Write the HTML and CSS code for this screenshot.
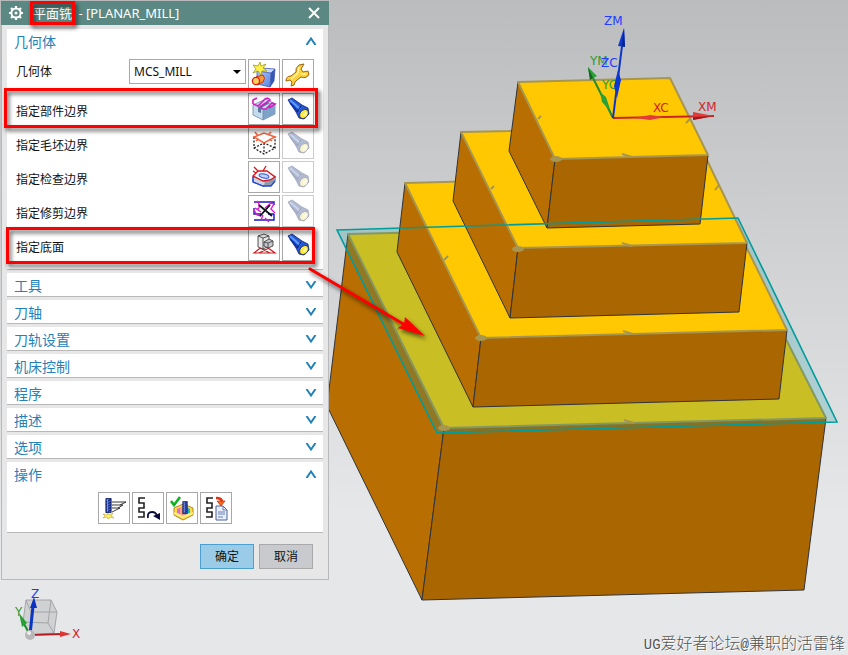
FILE: index.html
```html
<!DOCTYPE html>
<html lang="zh-CN">
<head>
<meta charset="utf-8">
<title>平面铣 - [PLANAR_MILL]</title>
<link rel="stylesheet" href="styles.css">
</head>
<body>
<svg class="scene" viewBox="0 0 848 655" preserveAspectRatio="xMinYMin meet" aria-hidden="true">
  <!-- base block -->
  <g stroke="#30343c" stroke-width="1" stroke-linejoin="round">
    <polygon points="348,234 327,406 422,600 444,428" fill="#b86e00"/>
    <polygon points="444,428 826,418 804,590 422,600" fill="#aa6600"/>
    <polygon points="348,234 728,225 826,418 444,428" fill="#ffc800" stroke="none"/>
  </g>
  <path class="rim" d="M444 428 348 234 728 225 826 418Z"/>
  <polygon points="337,230 738,218 837,422 437,433" fill="#0aa0a4" fill-opacity=".22"/>
  <!-- tier 1 -->
  <g stroke="#30343c" stroke-width="1" stroke-linejoin="round">
    <polygon points="405,183 397,252 473,407 481,338" fill="#b86e00"/>
    <polygon points="481,338 787,330 779,399 473,407" fill="#aa6600"/>
    <polygon points="405,183 711,175 787,330 481,338" fill="#ffc800" stroke="none"/>
  </g>
  <path class="rim" d="M481 338 405 183 711 175 787 330Z"/>
  <!-- tier 2 -->
  <g stroke="#30343c" stroke-width="1" stroke-linejoin="round">
    <polygon points="461,132 453,201 510,318 518,248" fill="#b86e00"/>
    <polygon points="518,248 747,243 739,312 510,318" fill="#aa6600"/>
    <polygon points="461,132 691,127 747,243 518,248" fill="#ffc800" stroke="none"/>
  </g>
  <path class="rim" d="M518 248 461 132 691 127 747 243Z"/>
  <!-- tier 3 -->
  <g stroke="#30343c" stroke-width="1" stroke-linejoin="round">
    <polygon points="518,82 509,151 547,228 555,159" fill="#b86e00"/>
    <polygon points="555,159 708,155 700,224 547,228" fill="#aa6600"/>
    <polygon points="518,82 670,78 708,155 555,159" fill="#ffc800" stroke="none"/>
  </g>
  <path class="rim" d="M555 159 518 82 670 78 708 155Z"/>
  <path class="tick" d="M622 154l10 3M622 243l10 3M623 331l10 3M624 420l10 3M538 119l3-3M491 189l3-3M444 260l4-4M397 330l3-3M719 185l-4 5M690 119l-4 4"/>
  <g fill="#a89650">
    <ellipse cx="556" cy="159" rx="6" ry="3"/><ellipse cx="518" cy="249" rx="6" ry="3"/>
    <ellipse cx="481" cy="338" rx="6" ry="3"/><ellipse cx="444" cy="428" rx="6" ry="3"/>
  </g>
  <polygon points="337,230 738,218 837,422 437,433" fill="none" stroke="#009c9c" stroke-width="1.6"/>
  <!-- machine and work coordinate axes -->
  <g class="axis-text">
    <text x="604" y="25" fill="#1f3cff">ZM</text><text x="590" y="65" fill="#2e9a3a">YM</text>
    <text x="601" y="67" fill="#1f3cff">ZC</text><text x="602" y="89" fill="#2e9a3a">YC</text>
    <text x="653" y="112" fill="#d0252c">XC</text><text x="698" y="111" fill="#d0252c">XM</text>
  </g>
  <path d="M613 118 590 72" stroke="#238a2d" stroke-width="2"/>
  <path d="M588 67 597 76 590 80ZM600 92 606 97 611 112 602 102Z" fill="#2aa036"/><path d="M588 67 593 78 590 80Z" fill="#14651e"/>
  <path d="M613 118 714 116" stroke="#c9252a" stroke-width="2"/>
  <path d="M714 116 693 112V120ZM634 118 650 115 665 117 650 120Z" fill="#e33a3a"/><path d="M714 116 693 117V120Z" fill="#a01818"/>
  <path d="M613 118 623 38" stroke="#0c35c8" stroke-width="2"/>
  <path d="M624 28 618 46 625 47ZM618 70 621 80 617 98 614 86Z" fill="#0b38d2"/><path d="M624 28 622 46 625 47Z" fill="#082385"/>
  <!-- view triad -->
  <path d="M26 600H51L57 612 54 633 30 635 23 622Z" fill="#d0d1d3"/>
  <path d="M26 600H51L57 612H31L26 600 23 622 48 623 51 600M57 612 54 633 30 635 31 612M48 623 54 633M23 622 30 635" fill="none" stroke="#a3a4a6"/>
  <path d="M30 635 23 622" stroke="#1c8c28" stroke-width="2"/><path d="M19 613 27 623 22 627Z" fill="#27a035"/>
  <path d="M30 635 62 634" stroke="#b81b20" stroke-width="2"/><path d="M71 634 60 631V637Z" fill="#e13535"/>
  <path d="M30 635 33 606" stroke="#0b36c5" stroke-width="3"/><path d="M34 597 30 608H37Z" fill="#0a31c0"/>
  <circle cx="30" cy="635" r="5" fill="#b7b7b9"/><circle cx="29" cy="633" r="2" fill="#eee"/>
  <g class="axis-text"><text x="31" y="598" fill="#1f3cff">Z</text><text x="15" y="616" fill="#2e9a3a">Y</text><text x="72" y="638" fill="#d0252c">X</text></g>
</svg>

<svg class="defs" aria-hidden="true">
  <defs>
    <linearGradient id="cubeFace" x1="0" y1="0" x2="1" y2="1"><stop offset="0" stop-color="#a9c8ff"/><stop offset="1" stop-color="#5683dc"/></linearGradient>
    <symbol id="torch" viewBox="0 0 30 30">
      <path d="M5 6 9 4 19 11 25 14 26 20 21 25 16 24 13 18Z" fill="#2356d8" stroke="#0b1f78" stroke-width=".8"/>
      <path d="M7 6 17 15" stroke="#5c9bff" stroke-width="2"/><path d="M7 9 15 18" stroke="#0b2a96" stroke-width="1.2"/>
      <path d="M18 12 14 18" stroke="#0b1f60"/>
      <ellipse cx="21" cy="20" rx="3.8" ry="5" transform="rotate(42 21 20)" fill="#ffe93c" stroke="#1b2a60" stroke-width=".8"/>
      <ellipse cx="22" cy="20" rx="1.3" ry="2.8" transform="rotate(42 22 20)" fill="#fff8a0"/>
    </symbol>
    <symbol id="snake" viewBox="0 0 30 30"><path d="M12 5H6V10H11V15H6V19H11V24H5" fill="none" stroke="#222" stroke-width="1.6"/></symbol>
    <symbol id="cutter" viewBox="0 0 8 18">
      <path d="M1 1H7V17H1Z" fill="#3857c8" stroke="#172766"/><path d="M1 5 7 2M1 8 7 5M1 11 7 8M1 14 7 11M1 17 7 14" stroke="#0c164d"/><path d="M3 2V16" stroke="#8faaff"/>
    </symbol>
  </defs>
</svg>

<main class="dialog">
  <header class="titlebar">
    <svg class="gear" viewBox="0 0 16 16" aria-hidden="true"><g stroke="#fff" fill="none"><circle cx="8" cy="8" r="4.6" stroke-width="2"/><path stroke-width="2.2" d="M8 1V3.500M8 12.500V15M1 8H3.500M12.500 8H15M3 3 4.800 4.800M11.200 11.200 13 13M3 13 4.800 11.200M11.200 4.800 13 3"/></g><circle cx="8" cy="8" r="1.5" fill="#fff"/></svg>
    <h1 class="title"><span class="marked-title">平面铣</span> - [PLANAR_MILL]</h1>
    <button class="close" type="button" aria-label="关闭"><svg viewBox="0 0 12 12"><path d="M1 1 11 11M11 1 1 11" stroke="#fff" stroke-width="2"/></svg></button>
  </header>

  <div class="sections">
    <section class="section geometry">
      <button class="section-head" type="button">几何体<svg class="chevron" viewBox="0 0 12 8"><path d="M1.500 8 6 1.500 10.500 8"/></svg></button>
      <div class="rows">
        <div class="row first">
          <label for="geometry">几何体</label>
          <span class="combo"><select id="geometry"><option>MCS_MILL</option></select><svg viewBox="0 0 8 4" aria-hidden="true"><path d="M0 0H8L4 4Z"/></svg></span>
          <button class="tool" type="button" aria-label="新建几何体"><svg viewBox="0 0 30 30">
            <path d="M8 11 12 8 26 9 22 13Z" fill="#c8dcff"/><path d="M8 11 22 13 21 27 8 24Z" fill="url(#cubeFace)"/><path d="M22 13 26 9 25 21 21 27Z" fill="#3558b4"/><path d="M8 11 12 8 26 9 25 21 21 27 8 24ZM8 11 22 13 26 9M22 13 21 27" fill="none" stroke="#4058b0" stroke-width=".8"/>
            <path d="M11 2 12 6 17 4 14 8 18 11 13 11 12 15 9 11 4 13 7 9 4 5 9 6Z" fill="#fff04a" stroke="#a39a20" stroke-width=".8"/>
            <path d="M7 17 14 15Q17 18 14 22L8 25Z" fill="#ff9a38" stroke="#d22c14"/><circle cx="7" cy="21" r="3.600" fill="#ffd05a" stroke="#d81e10" stroke-width="1.300"/>
          </svg></button>
          <button class="tool" type="button" aria-label="编辑"><svg viewBox="0 0 30 30"><path d="M16 5 21 4 18 9 20 12 25 11 26 14Q24 19 18 17L14 20 12 22Q12 26 8 26L9 22 7 20 3 21Q3 16 8 16L13 12Q12 8 16 5Z" fill="#ffd23c" stroke="#9a6410" stroke-width="1" stroke-linejoin="round"/><path d="M16 7 15 13 8 19M18 14 23 14" fill="none" stroke="#fff3a0" stroke-width="1.500"/></svg></button>
        </div>
        <div class="row marked-part">
          <span class="label">指定部件边界</span>
          <button class="tool" type="button" aria-label="选择部件边界"><svg viewBox="0 0 30 30">
            <path d="M4 11 8 9 17 5 26 10V20L14 26 4 21Z" fill="#c4dcee" stroke="#7088a8" stroke-width=".8"/><path d="M14 16 26 10V20L14 26Z" fill="#7fa3c8"/><path d="M9 13 18 8 21 9 12 14V19L9 18Z" fill="#58779c"/><path d="M14 16V26" stroke="#7088a8" stroke-width=".8"/>
            <path d="M4 10V6L8 4M4 10 9 12 16 5Q19 3 21 6L12 12 13 15 17 15 23 9 26 10 20 14" fill="none" stroke="#d41cc0" stroke-width="1.600"/>
          </svg></button>
          <button class="tool" type="button" aria-label="显示部件边界"><svg><use href="#torch"/></svg></button>
        </div>
        <div class="row">
          <span class="label">指定毛坯边界</span>
          <button class="tool" type="button" aria-label="选择毛坯边界"><svg viewBox="0 0 30 30"><path d="M5 9V20L15 26 26 20V9M15 15V26M5 20 15 15 26 20" fill="none" stroke="#222" stroke-width="1.300" stroke-dasharray="2 1.500"/><path d="M5 9 15 5 26 9 15 15ZM6 4 9 8M22 4 19 7M7 13 10 11M23 13 20 11" fill="none" stroke="#f0603c" stroke-width="1.500"/></svg></button>
          <button class="tool" type="button" aria-label="显示毛坯边界" disabled><svg><use href="#torch"/></svg></button>
        </div>
        <div class="row">
          <span class="label">指定检查边界</span>
          <button class="tool" type="button" aria-label="选择检查边界"><svg viewBox="0 0 30 30"><path d="M4 14V20L14 24 23 23 26 19V14L16 19Z" fill="#ccd4e4" stroke="#2748d0"/><path d="M16 19 26 14V19L20 24H15Z" fill="#8d9aaf"/><path d="M4 14 9 9 18 9 26 15 21 18 14 19Z" fill="#f2f4f8" stroke="#d0181c" stroke-width="1.300"/><path d="M5 5 9 9M17 4 14 9M4 9 7 11" fill="none" stroke="#d0181c" stroke-width="1.300"/><path d="M4 15V20L14 24H22L26 19" fill="none" stroke="#2748d0" stroke-width="1.300"/><ellipse cx="15" cy="14" rx="5" ry="2" transform="rotate(12 15 14)" fill="#c0d2f6" stroke="#2850e0"/></svg></button>
          <button class="tool" type="button" aria-label="显示检查边界" disabled><svg><use href="#torch"/></svg></button>
        </div>
        <div class="row">
          <span class="label">指定修剪边界</span>
          <button class="tool" type="button" aria-label="选择修剪边界"><svg viewBox="0 0 30 30"><path d="M5 6H25V9M25 18V24H5M5 12V18H12M19 18H25" fill="none" stroke="#1418c4" stroke-width="1.400"/><path d="M6 7Q9 3 10 9T6 12L12 16M16 12 22 7 25 8 22 13 26 17M5 14 8 19 12 20M16 22 20 26M12 24 14 19" fill="none" stroke="#d81ad0" stroke-width="1.400"/><path d="M10 9 23 20M21 9 11 20" stroke="#101018" stroke-width="1.800"/></svg></button>
          <button class="tool" type="button" aria-label="显示修剪边界" disabled><svg><use href="#torch"/></svg></button>
        </div>
        <div class="row marked-floor">
          <span class="label">指定底面</span>
          <button class="tool" type="button" aria-label="选择底面"><svg viewBox="0 0 30 30"><path d="M5 23 15 15 26 23ZM11 18 21 23M20 18 10 23" fill="none" stroke="#d0191b" stroke-width="1.200"/><g stroke="#444" stroke-width=".9" stroke-linejoin="round"><path d="M9 6 15 4 20 6V16L14 19 9 17Z" fill="#e6e6e6"/><path d="M9 6 14 8 20 6M14 8V19" fill="none"/><path d="M15 12 20 9 24 11V16L19 18 15 16Z" fill="#c4c8cc"/><path d="M15 12 19 13 24 11M19 13V18" fill="none"/></g></svg></button>
          <button class="tool" type="button" aria-label="显示底面"><svg><use href="#torch"/></svg></button>
        </div>
      </div>
    </section>
    <section class="section"><button class="section-head" type="button">工具<svg class="chevron" viewBox="0 0 12 8"><path d="M1.500 0 6 6.500 10.500 0"/></svg></button></section>
    <section class="section"><button class="section-head" type="button">刀轴<svg class="chevron" viewBox="0 0 12 8"><path d="M1.500 0 6 6.500 10.500 0"/></svg></button></section>
    <section class="section"><button class="section-head" type="button">刀轨设置<svg class="chevron" viewBox="0 0 12 8"><path d="M1.500 0 6 6.500 10.500 0"/></svg></button></section>
    <section class="section"><button class="section-head" type="button">机床控制<svg class="chevron" viewBox="0 0 12 8"><path d="M1.500 0 6 6.500 10.500 0"/></svg></button></section>
    <section class="section"><button class="section-head" type="button">程序<svg class="chevron" viewBox="0 0 12 8"><path d="M1.500 0 6 6.500 10.500 0"/></svg></button></section>
    <section class="section"><button class="section-head" type="button">描述<svg class="chevron" viewBox="0 0 12 8"><path d="M1.500 0 6 6.500 10.500 0"/></svg></button></section>
    <section class="section"><button class="section-head" type="button">选项<svg class="chevron" viewBox="0 0 12 8"><path d="M1.500 0 6 6.500 10.500 0"/></svg></button></section>
    <section class="section">
      <button class="section-head" type="button">操作<svg class="chevron" viewBox="0 0 12 8"><path d="M1.500 8 6 1.500 10.500 8"/></svg></button>
      <div class="actions">
        <button class="tool" type="button" aria-label="生成"><svg viewBox="0 0 30 30"><use href="#cutter" x="6" y="4" width="7" height="17"/><path d="M13 9H27L21 12M13 12H24L19 15M13 15H21L13 19" stroke="#222" stroke-width=".9" fill="none"/><path d="M9 20 10 22 14 20 12 23 15 25 11 24 9 26 8 24 4 25 6 23 4 21 8 22Z" fill="#fff36a" stroke="#c4a222" stroke-width=".6"/></svg></button>
        <button class="tool" type="button" aria-label="重播"><svg viewBox="0 0 30 30"><use href="#snake"/><path d="M15 25Q14 19 19 19 23 19 24 23" fill="none" stroke="#0a0a38" stroke-width="1.800"/><path d="M20 23 27 20V27Z" fill="#0a0a38"/></svg></button>
        <button class="tool" type="button" aria-label="确认"><svg viewBox="0 0 30 30"><path d="M7 15 16 11 26 15V22L16 27 7 22Z" fill="#ffd94c" stroke="#b68812"/><path d="M10 16 16 13 23 16V20L16 23 10 20Z" fill="#ff9c84"/><path d="M17 13 23 16V20L18 22Z" fill="#18b8b4"/><path d="M10 16 13 15V21L10 20Z" fill="#d66ce0"/><path d="M7 20 16 24 26 20" fill="none" stroke="#ffed88" stroke-width="2"/><use href="#cutter" x="15" y="7" width="6" height="15"/><path d="M4 8 7 12 13 4" fill="none" stroke="#10b020" stroke-width="2.600"/></svg></button>
        <button class="tool" type="button" aria-label="列表"><svg viewBox="0 0 30 30"><use href="#snake"/><path d="M15 13H22L26 17V27H15Z" fill="#e8effc" stroke="#4b62a4"/><path d="M22 13V17H26M17 19H24M17 21H24M17 24H22" fill="none" stroke="#6b7fae"/><path d="M15 5Q21 5 21 9" fill="none" stroke="#e03410" stroke-width="2.600"/><path d="M16 8H24L20 13Z" fill="#f26a18" stroke="#c42808" stroke-width=".7"/></svg></button>
      </div>
    </section>
  </div>

  <footer class="buttons">
    <button class="push primary" type="button">确定</button>
    <button class="push" type="button">取消</button>
  </footer>
</main>

<svg class="scene pointer" viewBox="0 0 848 655" preserveAspectRatio="xMinYMin meet" aria-hidden="true"><path d="M310 269 405 325" stroke="#f00" stroke-width="3" stroke-linecap="round"/><path d="M425 336 405 317 404 324 398 328Z" fill="#f00"/></svg>
<p class="watermark"><span>UG</span>爱好者论坛<span>@</span>兼职的活雷锋</p>
</body>
</html>
```
FILE: styles.css
```css
* { box-sizing: border-box; }

body {
  position: relative;
  margin: 0;
  min-height: 100vh;
  overflow: hidden;
  background: linear-gradient(#bbbcbe 0, #e6e7e9 78%, #e6e7e9 100%);
  font: 12px/18px "Noto Sans", "Noto Sans CJK SC", sans-serif;
  color: #111;
}

button, select { font: inherit; color: inherit; }

.scene { position: absolute; top: 0; left: 0; width: 100%; height: 100%; pointer-events: none; }
.rim { fill: none; stroke: #a89650; stroke-width: 2; stroke-linejoin: round; }
.tick { fill: none; stroke: #a89650; stroke-width: 2; }
.axis-text { font: 12px "DejaVu Sans", sans-serif; }
.pointer { filter: drop-shadow(2px 3px 2px rgba(0, 0, 0, .6)); }
.defs { position: absolute; width: 0; height: 0; }

.dialog {
  position: relative;
  width: 328px;
  margin-left: 1px;
  background: #e7e7e7;
  border: 1px solid #b8b9bb;
}

.titlebar {
  display: flex;
  align-items: center;
  height: 24px;
  margin: 0 -1px;
  padding: 0 9px 0 7px;
  background: #5b8882;
  color: #fff;
}
.gear { width: 16px; height: 16px; }
.title { flex: 1; margin: 0 0 0 9px; font-size: 13px; font-weight: 400; line-height: 24px; }
.close { display: flex; padding: 0; border: 0; background: none; }
.close svg { width: 12px; height: 12px; }

.marked-title, .marked-part, .marked-floor { position: relative; }
.marked-title { padding-right: 3px; }
.marked-title::after, .marked-part::after, .marked-floor::after {
  content: "";
  position: absolute;
  z-index: 1;
  border: 3px solid #f00;
  filter: drop-shadow(2px 3px 2px rgba(0, 0, 0, .65));
  pointer-events: none;
}
.marked-title::after { inset: -3px 0 -3px -3px; }
.marked-part::after { inset: -5px 5px -3px -3px; }
.marked-floor::after { inset: -2px 8px -3px -1px; }

.sections { display: flex; flex-direction: column; gap: 3px; padding: 4px 5px 0; }
.section { background: #fff; border-bottom: 1px solid #b8b8b8; }
.section-head {
  display: flex;
  align-items: center;
  justify-content: space-between;
  width: 100%;
  height: 23px;
  padding: 2px 6px 0 7px;
  border: 0;
  background: none;
  color: #2382b8;
  font-size: 14px;
  line-height: 21px;
}
.chevron { width: 12px; height: 8px; margin-bottom: 2px; fill: none; stroke: #2382b8; stroke-width: 2; }

.rows { display: flex; flex-direction: column; gap: 2px; padding: 7px 0 8px; }
.row { display: flex; align-items: center; gap: 2px; height: 32px; padding: 0 9px; }
.row label, .row .label { flex: 1; }
.row .label { padding-top: 6px; }
.row.first { align-items: flex-start; }
.row.first label { padding-top: 4px; }

.combo { position: relative; width: 117px; }
.combo select {
  display: block;
  appearance: none;
  width: 100%;
  height: 25px;
  padding: 0 4px;
  border: 1px solid #a8a8a8;
  border-radius: 0;
  background: #fff;
}
.combo svg { position: absolute; top: 11px; right: 5px; width: 8px; height: 4px; }

.tool { display: block; width: 32px; height: 32px; padding: 0; border: 1px solid #a8a8a8; background: #fff; }
.tool svg { display: block; width: 30px; height: 30px; }
.tool:disabled { border-color: #ccc; }
.tool:disabled svg { opacity: .4; filter: grayscale(.5); }

.actions { display: flex; justify-content: center; gap: 2px; padding: 7px 0 8px; }

.buttons { display: flex; justify-content: flex-end; gap: 5px; padding: 11px 15px 10px; }
.push { width: 54px; height: 25px; padding: 0; border: 1px solid #a9a9ab; background: #c9cace; }
.primary { border-color: #4ba0d0; background: #9acce7; }

.watermark {
  position: absolute;
  right: 3px;
  bottom: 2px;
  margin: 0;
  color: #555;
  font: 16px/20px "Noto Sans CJK SC", sans-serif;
  font-weight: 300;
  text-shadow: 1px 1px 0 #fff;
}
.watermark span { font: 14px "Liberation Mono", monospace; }
```
